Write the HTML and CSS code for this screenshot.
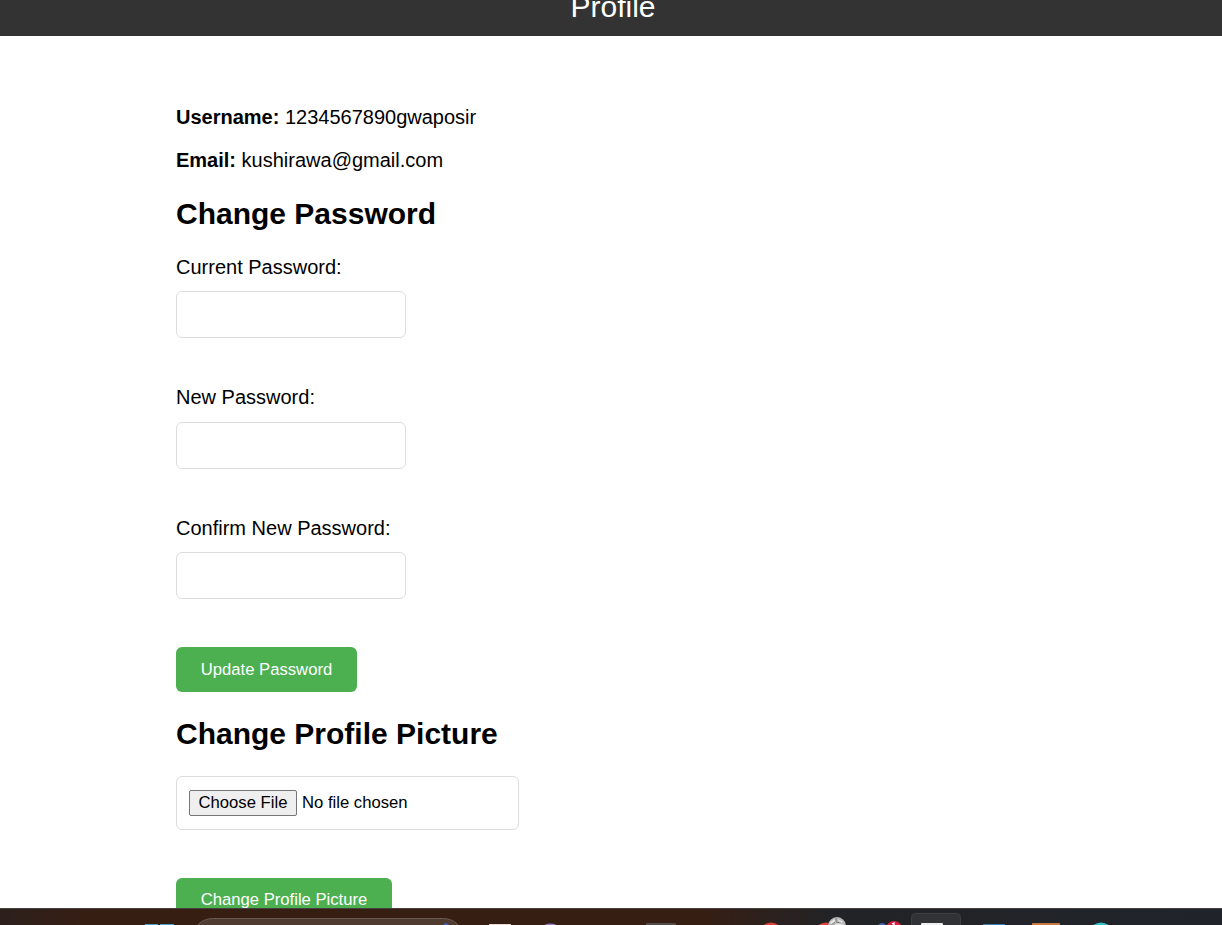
FILE: index.html
```html
<!DOCTYPE html>
<html lang="en">
<head>
<meta charset="utf-8">
<title>Profile</title>
<link rel="stylesheet" href="styles.css">
</head>
<body>
<header class="header"><span class="title">Profile</span></header>
<main class="content">
  <p class="info"><strong>Username:</strong> 1234567890gwaposir</p>
  <p class="info"><strong>Email:</strong> kushirawa@gmail.com</p>
  <h2 class="heading">Change Password</h2>
  <form class="form">
    <label class="label" for="current">Current Password:</label>
    <input class="field" id="current" type="password">
    <label class="label label-new" for="new">New Password:</label>
    <input class="field" id="new" type="password">
    <label class="label" for="confirm">Confirm New Password:</label>
    <input class="field" id="confirm" type="password">
    <button class="submit update" type="button">Update Password</button>
  </form>
  <h2 class="heading heading-picture">Change Profile Picture</h2>
  <div class="file">
    <button class="choose" type="button">Choose File</button>
    <span class="file-name">No file chosen</span>
  </div>
  <button class="submit picture" type="button">Change Profile Picture</button>
</main>
<footer class="taskbar">
  <svg class="taskbar-icons" width="1222" height="17" viewBox="0 0 1222 17">
    <path d="M145 17v-1h13v1zM160 17v-1h14v1z" fill="#4ba5c8"/>
    <rect x="192.500" y="10.500" width="271" height="40" rx="20" fill="#503b31" stroke="#6b584e"/>
    <path d="M443 17l3-2 3 2z" fill="#4264cf"/>
    <rect x="489" y="16" width="22" height="4" fill="#e5d8d2"/>
    <ellipse cx="550.500" cy="20" rx="8" ry="4.500" fill="#9278c8"/>
    <rect x="646" y="15" width="30" height="6" rx="1" fill="#514b49"/>
    <circle cx="771" cy="27" r="12.500" fill="#d94338"/>
    <circle cx="826" cy="27" r="12.500" fill="#d94338"/>
    <circle cx="837" cy="18" r="9" fill="#b9b9b9"/>
    <path d="M830 14l5-3 1 3-5 3zM838 11l5 3-3 2zM835 16l5-1 3 2h-8z" fill="#e8e8e8"/>
    <path d="M836 10v4l5 1M831 17l4-3" fill="none" stroke="#777"/>
    <circle cx="882" cy="19" r="4" fill="#4264b5"/>
    <circle cx="894" cy="21" r="8" fill="#d91f3f"/>
    <path d="M892 16l2-1v3" fill="none" stroke="#fff" stroke-width="1.300"/>
    <rect x="911.500" y="5.500" width="49" height="40" rx="4" fill="#303236" stroke="#3d3f43"/>
    <rect x="921" y="15" width="22" height="8" rx="1" fill="#eeeeee"/>
    <rect x="983" y="16" width="22" height="4" fill="#397eb5"/>
    <rect x="1032" y="15" width="28" height="6" rx="1" fill="#c87942"/>
    <circle cx="1101" cy="27" r="12.500" fill="#36bfc5"/>
  </svg>
</footer>
</body>
</html>
```

FILE: styles.css
```css
* { box-sizing: border-box; }
body {
  margin: 0;
  height: 925px;
  overflow: hidden;
  display: flex;
  flex-direction: column;
  background: #fff;
  color: #000;
  font: 20px/24px "Liberation Sans", Arial, sans-serif;
}
.header {
  flex: none;
  height: 36px;
  display: flex;
  justify-content: center;
  align-items: flex-end;
  padding: 0 0 11px 4px;
  background: #333;
  color: #fff;
  overflow: hidden;
}
.title { font-size: 30px; line-height: 36px; }
.content {
  flex: none;
  height: 872px;
  padding: 69px 0 0 176px;
  overflow: hidden;
}
.info { margin: 0 0 19px; }
.heading {
  margin: 24px 0 23px;
  font-size: 30px;
  line-height: 36px;
}
.form { display: flex; flex-direction: column; align-items: flex-start; }
.label { margin-bottom: 12px; }
.label-new { margin-bottom: 13px; }
.field {
  width: 230px;
  height: 47px;
  margin: 0 0 47px;
  padding: 12px;
  border: 1px solid #ddd;
  border-radius: 6px;
  background: #fff;
}
.submit {
  display: block;
  height: 45px;
  padding: 0;
  border: 0;
  border-radius: 6px;
  background: #4caf50;
  color: #fff;
  font: 16.67px/20px "Liberation Sans", Arial, sans-serif;
}
.update { width: 181px; margin-top: 1px; }
.picture { width: 216px; padding-bottom: 2px; }
.heading-picture { margin-bottom: 24px; }
.file {
  width: 343px;
  height: 54px;
  display: flex;
  align-items: center;
  gap: 5px;
  margin-bottom: 48px;
  padding: 0 12px;
  border: 1px solid #ddd;
  border-radius: 6px;
  font-size: 16.67px;
}
.choose {
  width: 108px;
  height: 26px;
  padding: 0;
  border: 1px solid #767676;
  border-radius: 2px;
  background: #efefef;
  color: #000;
  font: 16.67px/20px "Liberation Sans", Arial, sans-serif;
}
.taskbar {
  flex: none;
  height: 17px;
  overflow: hidden;
  border-top: 1px solid #45403e;
  background: linear-gradient(90deg, #2c201c 0, #371e13 90px, #371e13 700px, #222326 830px, #20242a 1222px);
}
.taskbar-icons { display: block; margin-top: -1px; }
```
